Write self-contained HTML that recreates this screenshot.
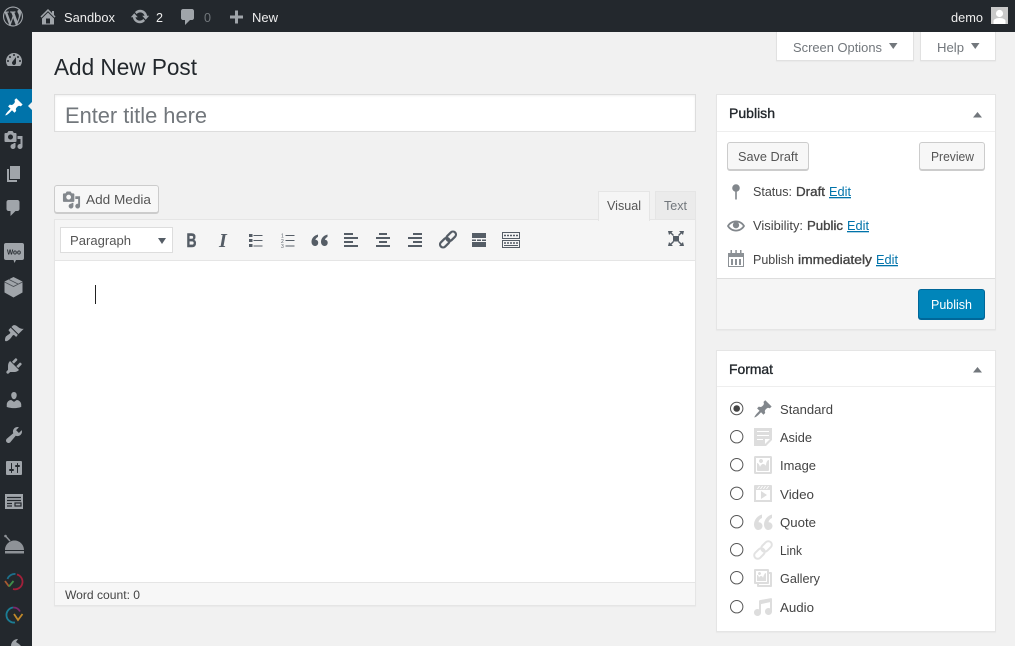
<!DOCTYPE html>
<html lang="en">
<head>
<meta charset="utf-8">
<title>Add New Post</title>
<style>
html,body{margin:0;padding:0;width:1015px;height:646px;overflow:hidden;background:#f1f1f1;font-family:"Liberation Sans",sans-serif}
.b{position:absolute;box-sizing:border-box}
svg{position:absolute;left:0;top:0}
text{font-family:"Liberation Sans",sans-serif}
.sb{stroke:#23282d;stroke-width:.35}
.sc{stroke:#444;stroke-width:.35}
</style>
</head>
<body>
<div class="b" style="left:0;top:0;width:1015px;height:32px;background:#23282d"></div>
<div class="b" style="left:0;top:32px;width:32px;height:614px;background:#23282d"></div>
<div class="b" style="left:0;top:89px;width:32px;height:34px;background:#0073aa"></div>

<div class="b" style="left:776px;top:32px;width:138px;height:29px;background:#fff;border:1px solid #e1e1e1;border-top:0;box-shadow:0 1px 1px rgba(0,0,0,.04)"></div>
<div class="b" style="left:920px;top:32px;width:76px;height:29px;background:#fff;border:1px solid #e1e1e1;border-top:0;box-shadow:0 1px 1px rgba(0,0,0,.04)"></div>

<div class="b" style="left:54px;top:94px;width:642px;height:38px;background:#fff;border:1px solid #ddd;box-shadow:inset 0 1px 2px rgba(0,0,0,.07)"></div>
<div class="b" style="left:54px;top:185px;width:105px;height:28px;background:#f7f7f7;border:1px solid #ccc;border-radius:3px;box-shadow:0 1px 0 #ccc"></div>

<div class="b" style="left:655px;top:191px;width:41px;height:29px;background:#ebebeb;border:1px solid #e5e5e5"></div>
<div class="b" style="left:54px;top:219px;width:642px;height:387px;background:#fff;border:1px solid #e5e5e5;box-shadow:0 1px 1px rgba(0,0,0,.04)"></div>
<div class="b" style="left:55px;top:220px;width:640px;height:41px;background:#f5f5f5;border-bottom:1px solid #e5e5e5"></div>
<div class="b" style="left:598px;top:191px;width:52px;height:30px;background:#f5f5f5;border:1px solid #e5e5e5;border-bottom:0"></div>
<div class="b" style="left:60px;top:227px;width:113px;height:26px;background:#fff;border:1px solid #ddd"></div>
<div class="b" style="left:55px;top:582px;width:640px;height:23px;background:#f7f7f7;border-top:1px solid #e5e5e5"></div>
<div class="b" style="left:95px;top:285px;width:1px;height:19px;background:#222"></div>

<div class="b" style="left:716px;top:94px;width:280px;height:236px;background:#fff;border:1px solid #e5e5e5;box-shadow:0 1px 1px rgba(0,0,0,.04)"></div>
<div class="b" style="left:717px;top:131px;width:278px;height:1px;background:#eee"></div>
<div class="b" style="left:717px;top:278px;width:278px;height:51px;background:#f5f5f5;border-top:1px solid #ddd"></div>
<div class="b" style="left:727px;top:142px;width:82px;height:28px;background:#f7f7f7;border:1px solid #ccc;border-radius:3px;box-shadow:0 1px 0 #ccc"></div>
<div class="b" style="left:919px;top:142px;width:66px;height:28px;background:#f7f7f7;border:1px solid #ccc;border-radius:3px;box-shadow:0 1px 0 #ccc"></div>
<div class="b" style="left:918px;top:289px;width:67px;height:30px;background:#0085ba;border:1px solid #006799;border-bottom-color:#006799;border-radius:3px;box-shadow:0 1px 0 #006799"></div>

<div class="b" style="left:716px;top:350px;width:280px;height:282px;background:#fff;border:1px solid #e5e5e5;box-shadow:0 1px 1px rgba(0,0,0,.04)"></div>
<div class="b" style="left:717px;top:386px;width:278px;height:1px;background:#eee"></div>

<svg width="1015" height="646" viewBox="0 0 1015 646" xmlns="http://www.w3.org/2000/svg">
<!-- admin bar icons -->
<g fill="#a0a5aa">
<path transform="translate(3,6.500)" d="M20 10c0-5.51-4.49-10-10-10C4.48 0 0 4.49 0 10c0 5.52 4.48 10 10 10 5.51 0 10-4.48 10-10zM7.78 15.37L4.37 6.22c.55-.02 1.17-.08 1.17-.08.5-.06.44-1.13-.06-1.11 0 0-1.45.11-2.37.11-.18 0-.37 0-.58-.01C4.12 2.69 6.87 1.11 10 1.11c2.33 0 4.45.87 6.05 2.34-.68-.11-1.65.39-1.65 1.58 0 .74.45 1.36.9 2.1.35.61.55 1.36.55 2.46 0 1.49-1.4 5-1.4 5l-3.03-8.37c.54-.02.82-.17.82-.17.5-.05.44-1.25-.06-1.22 0 0-1.44.12-2.38.12-.87 0-2.33-.12-2.33-.12-.5-.03-.56 1.2-.06 1.22l.92.08 1.26 3.41zM17.41 10c.24-.64.74-1.87.43-4.25.7 1.29 1.05 2.71 1.05 4.25 0 3.29-1.73 6.24-4.4 7.78.97-2.59 1.94-5.2 2.92-7.78zM6.1 18.09C3.12 16.65 1.11 13.53 1.11 10c0-1.3.23-2.48.72-3.59C3.25 10.3 4.67 14.2 6.1 18.09zm4.03-6.63l2.58 6.98c-.86.29-1.76.45-2.71.45-.79 0-1.57-.11-2.29-.33.81-2.38 1.62-4.74 2.42-7.1z"/>
<path transform="translate(38,6.500)" d="M16 8.5l1.53 1.53-1.06 1.06L10 4.62l-6.47 6.47-1.06-1.06L10 2.5l4 4v-2h2v4zm-6-2.46l6 5.99V18H4v-5.97zM12 17v-5H8v5h4z"/>
<path transform="translate(130,6.500)" d="M10.2 3.28c3.53 0 6.43 2.61 6.92 6h2.08l-3.5 4-3.5-4h2.32c-.45-1.97-2.21-3.44-4.32-3.44-1.45 0-2.73.71-3.54 1.78L4.95 5.66C6.23 4.2 8.11 3.28 10.2 3.28zm-.4 13.44c-3.52 0-6.43-2.61-6.92-6H.8l3.5-4c1.17 1.33 2.33 2.67 3.5 4H5.48c.45 1.97 2.21 3.44 4.32 3.44 1.45 0 2.73-.71 3.54-1.78l1.71 1.95c-1.28 1.46-3.15 2.39-5.25 2.39z"/>
<path transform="translate(178,7)" d="M5 2h9c1.1 0 2 .9 2 2v7c0 1.1-.9 2-2 2h-2l-5 5v-5H5c-1.1 0-2-.9-2-2V4c0-1.1.9-2 2-2z"/>
<path d="M235 10.500h3v5h5v3h-5v5h-3v-5h-5v-3h5z"/>
</g>
<text x="64" y="22" font-size="13" fill="#eee" textLength="51" lengthAdjust="spacingAndGlyphs">Sandbox</text>
<text x="156" y="22" font-size="13" fill="#eee" textLength="7" lengthAdjust="spacingAndGlyphs">2</text>
<text x="204" y="22" font-size="13" fill="#72777c" textLength="7" lengthAdjust="spacingAndGlyphs">0</text>
<text x="252" y="22" font-size="13" fill="#eee" textLength="26" lengthAdjust="spacingAndGlyphs">New</text>
<text x="951" y="22" font-size="13" fill="#eee" textLength="32" lengthAdjust="spacingAndGlyphs">demo</text>
<rect x="991" y="7" width="17" height="17" fill="#c9c9c9"/>
<circle cx="999.500" cy="13.500" r="3.600" fill="#fff"/>
<path fill="#fff" d="M993.500 24v-3c0-1.500 2.500-3 6-3s6 1.500 6 3v3z"/>

<!-- sidebar icons -->
<g fill="#a0a5aa">
<path transform="translate(4,50)" d="M3.76 16h12.48c1.1-1.37 1.76-3.11 1.76-5 0-4.42-3.58-8-8-8s-8 3.58-8 8c0 1.89.66 3.63 1.76 5zM10 4c.55 0 1 .45 1 1s-.45 1-1 1-1-.45-1-1 .45-1 1-1zM6 6c.55 0 1 .45 1 1s-.45 1-1 1-1-.45-1-1 .45-1 1-1zm8 0c.55 0 1 .45 1 1s-.45 1-1 1-1-.45-1-1 .45-1 1-1zm-5.370 5.550L12 7v6c0 1.100-.9 2-2 2s-2-.9-2-2c0-.57.24-1.080.63-1.450zM4 10c.55 0 1 .45 1 1s-.45 1-1 1-1-.45-1-1 .45-1 1-1zm12 0c.55 0 1 .45 1 1s-.45 1-1 1-1-.45-1-1 .45-1 1-1z"/>
<path transform="translate(3.500,130)" d="M13 11V4c0-.55-.45-1-1-1h-1.670L9 1H5L3.670 3H2c-.55 0-1 .45-1 1v7c0 .55.45 1 1 1h10c.55 0 1-.45 1-1zM7 4.500c1.380 0 2.500 1.120 2.500 2.500S8.380 9.500 7 9.500 4.500 8.380 4.500 7 5.620 4.500 7 4.500zM14 6h5v10.500c0 1.380-1.120 2.500-2.500 2.500S14 17.880 14 16.500s1.120-2.500 2.500-2.500c.17 0 .34.02.5.05V9h-3V6zm-4 8.050V13h2v3.500c0 1.380-1.120 2.500-2.500 2.500S7 17.880 7 16.500 8.120 14 9.500 14c.17 0 .34.02.5.05z"/>
<path transform="translate(4,164)" d="M6 15V2h10v13H6zm-1 1h8v2H3V5h2v11z"/>
<path transform="translate(3.500,198)" d="M5 2h9c1.100 0 2 .9 2 2v7c0 1.100-.9 2-2 2h-2l-5 5v-5H5c-1.100 0-2-.9-2-2V4c0-1.100.9-2 2-2z"/>
<path d="M6 243h16a2 2 0 0 1 2 2v13a2 2 0 0 1-2 2h-6l-1.500 3-1-3H6a2 2 0 0 1-2-2v-13a2 2 0 0 1 2-2z"/>
<path d="M13.500 277l9 4.500v11l-9 5-9-5v-11z"/>
<path transform="translate(4,323)" d="M14.480 11.060L7.410 3.990l1.500-1.500c.5-.56 2.300-.47 3.510.32 1.210.8 1.430 1.280 2.910 2.100 1.180.64 2.450 1.260 4.450.85zm-.71.71L6.700 4.700 4.930 6.470c-.39.39-.39 1.020 0 1.410l1.060 1.060c.39.39.39 1.030 0 1.420-.6.6-1.430 1.110-2.210 1.690-.35.26-.7.53-1.010.84C1.430 13.230 1 15.700 1 17.300c0 .55.45 1 1 1 1.600 0 3.070-1.430 4.410-2.770.31-.31.58-.66.84-1.010.58-.78 1.090-1.610 1.690-2.210.39-.39 1.030-.39 1.420 0l1.060 1.060c.39.39 1.020.39 1.410 0z"/>
<path transform="translate(4,356)" d="M13.110 4.360L9.870 7.600 8 5.730l3.240-3.240c.35-.34 1.050-.2 1.560.32.52.51.66 1.210.31 1.550zm-8 1.770l.91-1.120 9.010 9.010-1.190.84c-.71.71-2.630 1.160-3.820 1.160H6.140L4.900 17.260c-.59.59-1.540.59-2.120 0-.59-.58-.59-1.530 0-2.120l1.240-1.240v-3.880c0-1.130.4-3.190 1.090-3.890zm7.260 3.970l3.240-3.240c.34-.35 1.040-.21 1.550.31.52.51.66 1.210.31 1.550l-3.240 3.250z"/>
<path transform="translate(4,390)" d="M10 9.250c-2.270 0-2.730-3.440-2.730-3.440C7 4.020 7.820 2 9.970 2c2.160 0 2.980 2.020 2.710 3.810 0 0-.41 3.440-2.680 3.440zm0 2.570L12.720 10c2.390 0 4.520 2.330 4.520 4.530v2.490s-3.650 1.130-7.240 1.130c-3.650 0-7.240-1.130-7.240-1.130v-2.490c0-2.250 1.940-4.480 4.470-4.480z"/>
<path transform="translate(4,425)" d="M16.680 9.770c-1.340 1.340-3.300 1.670-4.950.99l-5.410 6.520c-.99.99-2.590.99-3.580 0s-.99-2.590 0-3.570l6.520-5.420c-.68-1.650-.35-3.610.99-4.950 1.280-1.280 3.120-1.620 4.720-1.060l-2.890 2.890 2.820 2.820 2.860-2.870c.53 1.580.18 3.390-1.080 4.650z"/>
<path transform="translate(4,458)" d="M18 16V4c0-.55-.45-1-1-1H3c-.55 0-1 .45-1 1v12c0 .55.45 1 1 1h14c.55 0 1-.45 1-1zM8 11h1c.55 0 1 .45 1 1s-.45 1-1 1H8v1.500c0 .28-.22.5-.5.5s-.5-.22-.5-.5V13H6c-.55 0-1-.45-1-1s.45-1 1-1h1V5.500c0-.28.22-.5.5-.5s.5.22.5.5V11zm5-2h-1c-.55 0-1-.45-1-1s.45-1 1-1h1V5.500c0-.28.22-.5.5-.5s.5.22.5.5V7h1c.55 0 1 .45 1 1s-.45 1-1 1h-1v5.500c0 .28-.22.5-.5.5s-.5-.22-.5-.5V9z"/>
<rect x="5" y="494" width="18" height="15"/>
</g>
<text x="7" y="254.500" font-size="7.500" font-weight="bold" fill="#23282d" textLength="14" lengthAdjust="spacingAndGlyphs">Woo</text>
<path d="M4.500 282l9 4.500 9-4.500M9 279.500l9 4.500" fill="none" stroke="#4a4f55" stroke-width=".8"/>
<path d="M7 497.500h14M7 500.500h14M7 503.500h5M7 506h5M15 503h6v3h-6z" fill="none" stroke="#23282d" stroke-width="1.200"/>
<!-- cloche -->
<path fill="#8e9297" d="M5 550c0-5.500 4.500-9.500 9.500-9.500s9.500 4 9.500 9.500zM5 551h19v2.500H5z"/>
<path d="M5.500 536l4.500 5" fill="none" stroke="#8e9297" stroke-width="1.500"/>
<circle cx="5.500" cy="536" r="1.300" fill="#8e9297"/>
<!-- colored circles -->
<g fill="none" stroke-width="1.800">
<path d="M7.500 579a7.500 7.500 0 0 1 8-5" stroke="#1d6f8a"/>
<path d="M17 574.500a7.500 7.500 0 0 1-4 14.500" stroke="#a3203a"/>
<path d="M5 581l4 5.500" stroke="#a85a30"/>
<path d="M9 586.500l4.500-5.500" stroke="#3f8f4a"/>
<path d="M13 607.500a7.500 7.500 0 0 1 7 4" stroke="#7a2a6e"/>
<path d="M15 622.500a7.500 7.500 0 0 1-2-15" stroke="#1b7d94"/>
<path d="M14 614l4 6 4.500-6" stroke="#c0882a"/>
</g>
<path fill="#a0a5aa" d="M11 646c0-4 3-7 7-7l-2 3 3 2 2 2z"/>
<!-- current arrow -->
<path fill="#f1f1f1" d="M32 102l-4 4 4 4z"/>
<path fill="#fff" transform="translate(4,97)" d="M10.440 3.020l1.820-1.820 6.360 6.350-1.830 1.820c-1.050-.68-2.480-.57-3.410.36l-.75.75c-.92.93-1.040 2.350-.35 3.410l-1.830 1.820-2.410-2.410-2.800 2.790c-.42.42-3.380 2.710-3.800 2.290s1.860-3.390 2.280-3.810l2.790-2.790L4.100 9.360l1.830-1.820c1.050.69 2.480.57 3.400-.36l.75-.75c.93-.92 1.050-2.350.36-3.410z"/>

<!-- heading & title -->
<text x="54" y="75" font-size="23" fill="#23282d" textLength="143" lengthAdjust="spacingAndGlyphs">Add New Post</text>
<text x="65" y="123" font-size="22" fill="#72777c" textLength="142" lengthAdjust="spacingAndGlyphs">Enter title here</text>

<!-- screen options -->
<text x="793" y="52" font-size="13" fill="#72777c" textLength="89" lengthAdjust="spacingAndGlyphs">Screen Options</text>
<path fill="#72777c" d="M889 43h8.500l-4.250 6z"/>
<text x="937" y="52" font-size="13" fill="#72777c" textLength="27" lengthAdjust="spacingAndGlyphs">Help</text>
<path fill="#72777c" d="M971 43h8.500l-4.250 6z"/>

<!-- add media -->
<path fill="#82878c" transform="translate(62,190.500) scale(.95)" d="M13 11V4c0-.55-.45-1-1-1h-1.670L9 1H5L3.670 3H2c-.55 0-1 .45-1 1v7c0 .55.45 1 1 1h10c.55 0 1-.45 1-1zM7 4.500c1.380 0 2.500 1.120 2.500 2.500S8.380 9.500 7 9.500 4.500 8.380 4.500 7 5.620 4.500 7 4.500zM14 6h5v10.500c0 1.380-1.120 2.500-2.500 2.500S14 17.880 14 16.500s1.120-2.500 2.500-2.500c.17 0 .34.02.5.05V9h-3V6zm-4 8.050V13h2v3.500c0 1.380-1.120 2.500-2.500 2.500S7 17.880 7 16.500 8.120 14 9.500 14c.17 0 .34.02.5.05z"/>
<text x="86" y="204" font-size="13" fill="#555" textLength="65" lengthAdjust="spacingAndGlyphs">Add Media</text>

<!-- tabs -->
<text x="607" y="210" font-size="13" fill="#555" textLength="34" lengthAdjust="spacingAndGlyphs">Visual</text>
<text x="664" y="210" font-size="13" fill="#72777c" textLength="23" lengthAdjust="spacingAndGlyphs">Text</text>

<!-- toolbar -->
<text x="70" y="245" font-size="13" fill="#555" textLength="61" lengthAdjust="spacingAndGlyphs">Paragraph</text>
<path fill="#555d66" d="M158 238h8l-4 6z"/>
<g fill="#555d66">
<text x="186.500" y="247" font-size="19" font-weight="bold" stroke="#555d66" stroke-width=".5" textLength="10" lengthAdjust="spacingAndGlyphs">B</text>
<text x="219" y="247" font-size="20" font-weight="bold" font-style="italic" style="font-family:'Liberation Serif',serif">I</text>
<rect x="249" y="234" width="3.500" height="3"/><rect x="249" y="239" width="3.500" height="3"/><rect x="249" y="244" width="3.500" height="3"/>
<rect x="253.500" y="235" width="9" height="1"/><rect x="253.500" y="240" width="9" height="1"/><rect x="253.500" y="245.500" width="9" height="1"/>
<text x="281" y="237.500" font-size="5">1</text><text x="281" y="243" font-size="5">2</text><text x="281" y="248" font-size="5">3</text>
<rect x="285.500" y="235" width="9" height="1"/><rect x="285.500" y="240" width="9" height="1"/><rect x="285.500" y="245.500" width="9" height="1"/>
<path d="M318 234.500c-3.800 1-6.500 3.700-6.500 7.300 0 2.500 1.400 4.200 3.400 4.200s3.300-1.500 3.300-3.300-1.200-3-2.800-2.800c.2-1.200 1.200-2.300 2.600-3zM327.500 234.500c-3.800 1-6.500 3.700-6.500 7.300 0 2.500 1.400 4.200 3.400 4.200s3.300-1.500 3.300-3.300-1.200-3-2.800-2.800c.2-1.200 1.200-2.300 2.600-3z"/>
<rect x="344" y="233" width="9" height="2"/><rect x="344" y="237" width="14" height="2"/><rect x="344" y="241" width="9" height="2"/><rect x="344" y="245" width="14" height="2"/>
<rect x="379" y="233" width="8" height="2"/><rect x="376" y="237" width="14" height="2"/><rect x="379" y="241" width="8" height="2"/><rect x="376" y="245" width="14" height="2"/>
<rect x="413" y="233" width="9" height="2"/><rect x="408" y="237" width="14" height="2"/><rect x="413" y="241" width="9" height="2"/><rect x="408" y="245" width="14" height="2"/>
<rect x="472" y="233" width="14" height="5"/><rect x="472" y="239.500" width="4" height="1.500"/><rect x="477" y="239.500" width="4" height="1.500"/><rect x="482" y="239.500" width="4" height="1.500"/><rect x="472" y="242" width="14" height="5"/>
</g>
<g transform="rotate(-45 448 239.500)" fill="none" stroke="#555d66" stroke-width="2.200">
<rect x="438" y="236.500" width="11" height="6" rx="3"/>
<rect x="447" y="236.500" width="11" height="6" rx="3"/>
</g>
<g fill="none" stroke="#555d66" stroke-width="1">
<rect x="502.500" y="232.500" width="17" height="6"/>
<rect x="502.500" y="240.500" width="17" height="7"/>
<path d="M504 235.500h14M504 243h14" stroke-dasharray="2 1" stroke-width="1.500"/>
<path d="M504 245.500h14"/>
</g>
<g fill="#555d66">
<rect x="673" y="236" width="6" height="5.500"/>
<path d="M668 231h5l-1.500 1.500 2.500 2.500-1 1-2.500-2.500L669 235zM684 231h-5l1.500 1.500-2.500 2.500 1 1 2.500-2.500 1.500 1.500zM668 246h5l-1.500-1.500 2.500-2.500-1-1-2.500 2.500L669 242zM684 246h-5l1.500-1.500-2.500-2.500 1-1 2.500 2.500 1.500-1.500z"/>
</g>
<text x="65" y="599" font-size="12" fill="#444" textLength="75" lengthAdjust="spacingAndGlyphs">Word count: 0</text>

<!-- publish box -->
<text class="sb" x="729" y="118" font-size="14" fill="#23282d" textLength="46" lengthAdjust="spacingAndGlyphs">Publish</text>
<path fill="#72777c" d="M973 117.500h9l-4.500-5.500z"/>
<text x="738" y="161" font-size="13" fill="#555" textLength="60" lengthAdjust="spacingAndGlyphs">Save Draft</text>
<text x="931" y="161" font-size="13" fill="#555" textLength="43" lengthAdjust="spacingAndGlyphs">Preview</text>

<circle cx="736" cy="188" r="3.800" fill="#82878c"/>
<rect x="735.200" y="190" width="1.600" height="9.500" fill="#82878c"/>
<path fill="#82878c" transform="translate(727,217) scale(.9)" d="M19.700 9.400C17.700 6 14 3.900 10 3.900S2.300 6 .3 9.400L0 10l.3.6c2 3.400 5.700 5.500 9.700 5.500s7.700-2.100 9.700-5.500l.3-.6-.3-.6zM10 14.100c-3.100 0-6-1.600-7.700-4.100C3.600 8 5.700 6.600 8 6.100c-.9.6-1.500 1.700-1.500 2.900 0 1.900 1.600 3.500 3.500 3.500s3.500-1.600 3.500-3.500c0-1.200-.6-2.300-1.500-2.900 2.300.5 4.400 1.900 5.700 3.900-1.700 2.500-4.600 4.100-7.700 4.100z"/>
<g fill="#8c9196">
<rect x="728" y="253" width="16" height="4"/>
<rect x="730.500" y="250" width="1.500" height="3.500"/><rect x="735.300" y="250" width="1.500" height="3.500"/><rect x="740" y="250" width="1.500" height="3.500"/>
<rect x="731" y="259" width="2" height="6"/><rect x="735" y="259" width="2" height="6"/><rect x="739" y="259" width="2" height="6"/>
</g>
<rect x="728.500" y="253.500" width="15" height="13" fill="none" stroke="#8c9196"/>

<text class="sc" x="753" y="196" font-size="13" style="stroke:none" fill="#444" textLength="39" lengthAdjust="spacingAndGlyphs">Status:</text>
<text class="sc" x="796" y="196" font-size="13" fill="#444" textLength="29" lengthAdjust="spacingAndGlyphs">Draft</text>
<text x="829" y="196" font-size="13" fill="#0073aa" text-decoration="underline" textLength="22" lengthAdjust="spacingAndGlyphs">Edit</text>
<text x="753" y="230" font-size="13" fill="#444" textLength="50" lengthAdjust="spacingAndGlyphs">Visibility:</text>
<text class="sc" x="807" y="230" font-size="13" fill="#444" textLength="36" lengthAdjust="spacingAndGlyphs">Public</text>
<text x="847" y="230" font-size="13" fill="#0073aa" text-decoration="underline" textLength="22" lengthAdjust="spacingAndGlyphs">Edit</text>
<text x="753" y="264" font-size="13" fill="#444" textLength="41" lengthAdjust="spacingAndGlyphs">Publish</text>
<text class="sc" x="798" y="264" font-size="13" fill="#444" textLength="74" lengthAdjust="spacingAndGlyphs">immediately</text>
<text x="876" y="264" font-size="13" fill="#0073aa" text-decoration="underline" textLength="22" lengthAdjust="spacingAndGlyphs">Edit</text>
<text x="931" y="309" font-size="13" fill="#fff" textLength="41" lengthAdjust="spacingAndGlyphs">Publish</text>

<!-- format box -->
<text class="sb" x="729" y="374" font-size="14" fill="#23282d" textLength="44" lengthAdjust="spacingAndGlyphs">Format</text>
<path fill="#72777c" d="M973 372.500h9l-4.500-5.500z"/>
<g fill="#fff" stroke="#555" stroke-width="1">
<circle cx="736.700" cy="408.500" r="6.200"/><circle cx="736.700" cy="436.700" r="6.200"/><circle cx="736.700" cy="464.700" r="6.200"/><circle cx="736.700" cy="493.300" r="6.200"/><circle cx="736.700" cy="521.700" r="6.200"/><circle cx="736.700" cy="549.700" r="6.200"/><circle cx="736.700" cy="577.700" r="6.200"/><circle cx="736.700" cy="606.700" r="6.200"/>
</g>
<circle cx="736.700" cy="408.500" r="3.300" fill="#444"/>

<path fill="#82878c" transform="translate(753,399)" d="M10.440 3.020l1.820-1.820 6.360 6.350-1.830 1.820c-1.050-.68-2.480-.57-3.410.36l-.75.75c-.92.93-1.040 2.350-.35 3.410l-1.830 1.820-2.410-2.410-2.800 2.790c-.42.42-3.380 2.710-3.800 2.290s1.860-3.390 2.280-3.810l2.790-2.790L4.100 9.360l1.830-1.820c1.050.69 2.480.57 3.400-.36l.75-.75c.93-.92 1.050-2.350.36-3.410z"/>
<g fill="#ddd">
<path transform="translate(753,427)" d="M1 1h18v12l-6 6H1V1zm3 3v1h12V4H4zm0 4v1h12V8H4zm6 5v-1H4v1h6zm2 4l5-5h-5v5z"/>
<path transform="translate(753,455)" d="M2.250 1h15.500c.69 0 1.250.56 1.250 1.250v15.500c0 .69-.56 1.250-1.250 1.250H2.250C1.560 19 1 18.440 1 17.750V2.250C1 1.560 1.560 1 2.250 1zM17 17V3H3v14h14zM10 6c0-1.100-.9-2-2-2s-2 .9-2 2 .9 2 2 2 2-.9 2-2zm3 5s0-6 3-6v10c0 .55-.45 1-1 1H5c-.55 0-1-.45-1-1V8c2 0 3 4 3 4s1-3 3-3 3 2 3 2z"/>
<path transform="translate(753,484)" d="M2 1h16c.55 0 1 .45 1 1v16l-18-.02V2c0-.55.45-1 1-1zm4 1L4 5h1l2-3H6zm4 0H9L7 5h1zm3 0h-1l-2 3h1zm3 0h-1l-2 3h1zm1 14V6H3v10h14zM8 7l6 4-6 4V7z"/>
<path transform="translate(753,512)" d="M9 2.500C5 3.500 1 7.500 1 12.500 1 15.500 2.800 18 5.200 18S9.500 16.200 9.500 14 7.500 10 5.500 10.300C5.800 8.300 7 6.800 9 6zM19 2.500c-4 1-8 5-8 10 0 3 1.800 5.500 4.200 5.500s4.300-1.800 4.300-4-2-4-4-3.700c.3-2 1.500-3.500 3.500-4.300z"/>
<path transform="translate(753,568)" d="M16 4h1.960c.57 0 1.040.47 1.040 1.040v12.920c0 .57-.47 1.040-1.040 1.040H5.040C4.470 19 4 18.530 4 17.960V16H2.040C1.470 16 1 15.530 1 14.960V2.040C1 1.470 1.470 1 2.040 1h12.920c.57 0 1.040.47 1.040 1.040V4zM3 14h11V3H3v11zm5-8.500C8 4.670 7.330 4 6.500 4S5 4.670 5 5.500 5.670 7 6.500 7 8 6.330 8 5.500zm2 4.500s1-5 3-5v8H4V7c2 0 2 3 2 3s.33-2 2-2 2 2 2 2zm7 7V6h-1v8.960c0 .57-.47 1.040-1.040 1.040H6v1h11z"/>
<path transform="translate(753,597)" d="M6.990 3.080l11.020-2c.55-.08.99.45.99 1V14.500c0 1.940-1.570 3.500-3.500 3.500S12 16.440 12 14.500c0-1.930 1.570-3.500 3.500-3.500.54 0 1.040.14 1.500.35V5.080l-9 2V16c-.24 1.700-1.740 3-3.500 3C2.570 19 1 17.440 1 15.500 1 13.570 2.570 12 4.500 12c.54 0 1.040.14 1.500.35V4.080c0-.55.44-.91.99-1z"/>
</g>
<g transform="rotate(-45 763 550)" fill="none" stroke="#e2e2e2" stroke-width="2">
<rect x="752" y="546.500" width="12" height="7" rx="3.500"/>
<rect x="762" y="546.500" width="12" height="7" rx="3.500"/>
</g>
<g font-size="13" fill="#444">
<text x="780" y="414" textLength="53" lengthAdjust="spacingAndGlyphs">Standard</text>
<text x="780" y="442" textLength="32" lengthAdjust="spacingAndGlyphs">Aside</text>
<text x="780" y="470" textLength="36" lengthAdjust="spacingAndGlyphs">Image</text>
<text x="780" y="499" textLength="34" lengthAdjust="spacingAndGlyphs">Video</text>
<text x="780" y="527" textLength="36" lengthAdjust="spacingAndGlyphs">Quote</text>
<text x="780" y="555" textLength="22" lengthAdjust="spacingAndGlyphs">Link</text>
<text x="780" y="583" textLength="40" lengthAdjust="spacingAndGlyphs">Gallery</text>
<text x="780" y="612" textLength="34" lengthAdjust="spacingAndGlyphs">Audio</text>
</g>
</svg>
</body>
</html>
